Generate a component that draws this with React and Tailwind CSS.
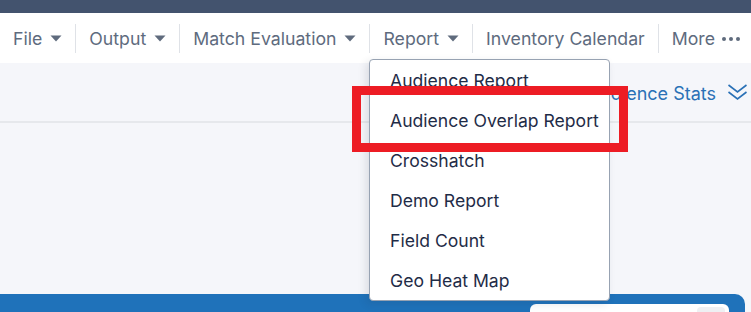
import React from 'react'

const Caret = () => (
  <svg width="12" height="7" viewBox="0 0 12 7" className="ml-2 mt-[1px]">
    <path d="M0.5 0.5 L11.5 0.5 L6 6.5 Z" fill="#5f6b7d" />
  </svg>
)

const Sep = () => <div className="w-px h-[29px] bg-[#dfe2e7]" />

const NavItem = ({ label, caret }) => (
  <div className="flex items-center px-[13px]">
    <span className="pt-[3px]">{label}</span>
    {caret && <Caret />}
  </div>
)

const reportItems = [
  'Audience Report',
  'Audience Overlap Report',
  'Crosshatch',
  'Demo Report',
  'Field Count',
  'Geo Heat Map',
]

export default function App() {
  return (
    <div className="relative w-[751px] h-[312px] overflow-hidden bg-[#f5f6fa] font-['Inter',sans-serif] flex flex-col">
      <div className="h-[13px] bg-[#43536e] shrink-0" />

      <nav className="h-[50px] bg-white flex items-center text-[17.7px] text-[#5e6b7e] shrink-0">
        <NavItem label="File" caret />
        <Sep />
        <NavItem label="Output" caret />
        <Sep />
        <NavItem label="Match Evaluation" caret />
        <Sep />
        <NavItem label="Report" caret />
        <Sep />
        <NavItem label="Inventory Calendar" />
        <Sep />
        <div className="flex items-center pl-[13px]">
          <span className="pt-[3px]">More</span>
          <span className="flex gap-[3px] ml-[7px] mt-[2px]">
            <span className="w-[4px] h-[4px] rounded-full bg-[#5f6b7d]" />
            <span className="w-[4px] h-[4px] rounded-full bg-[#5f6b7d]" />
            <span className="w-[4px] h-[4px] rounded-full bg-[#5f6b7d]" />
          </span>
        </div>
      </nav>

      <div className="h-[58px] flex items-center justify-end pr-[3px] shrink-0">
        <span className="text-[18px] text-[#2a71b6] pt-[3px]">Audience Stats</span>
        <svg width="21" height="18" viewBox="0 0 21 18" className="ml-[11px]" fill="none" stroke="#2a71b6" strokeWidth="1.6">
          <path d="M1.5 2 L10.5 9 L19.5 2" />
          <path d="M1.5 9 L10.5 16 L19.5 9" />
        </svg>
      </div>
      <div className="h-[2px] bg-[#e6e8ec] shrink-0" />

      <div className="flex-1" />

      <div className="h-[18px] mr-[6px] bg-[#1f72ba] rounded-tr-[10px] shrink-0 pt-[10px] pl-[530px] pr-[16px]">
        <div className="h-full bg-white rounded-t-[6px] flex justify-end pr-[4px] pt-[3px]">
          <div className="w-[28px] h-full bg-[#eef0f3] rounded-t-[4px]" />
        </div>
      </div>

      <div className="absolute left-[369px] top-[59px] w-[241px] bg-white border border-[#97a2b2] rounded-[4px] shadow-[-3px_3px_8px_rgba(30,40,60,0.12)]">
        {reportItems.map((item) => (
          <div key={item} className="h-[40px] flex items-center pl-[20px] pt-[2px] text-[17.6px] text-[#1f2c47]">
            {item}
          </div>
        ))}
      </div>

      <div className="absolute left-[352px] top-[86px] w-[276px] h-[66px] border-[9px] border-[#ed1c24]" />
    </div>
  )
}
